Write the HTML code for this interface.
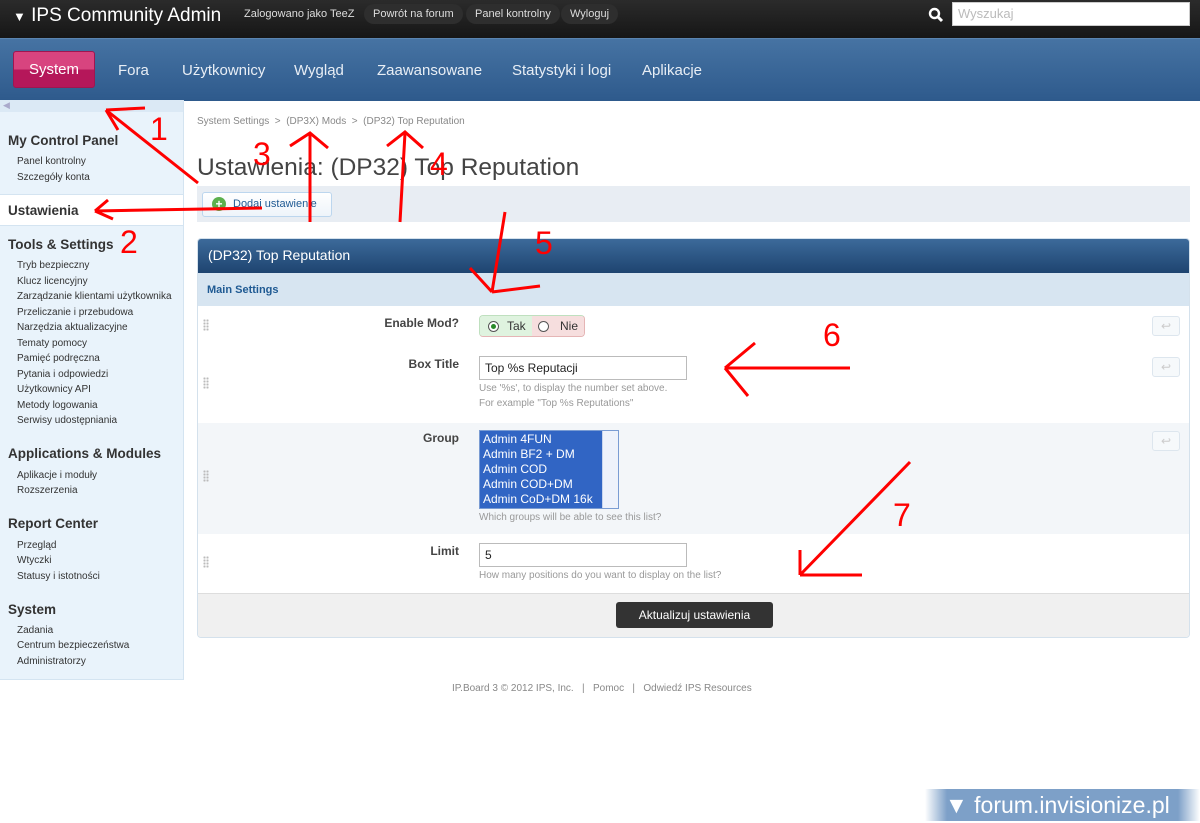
<!DOCTYPE html>
<html><head><meta charset="utf-8"><style>
*{box-sizing:border-box;margin:0;padding:0}
body{width:1200px;height:823px;position:relative;background:#fff;font-family:"Liberation Sans",Arial,sans-serif;overflow:hidden;color:#333}
.a{position:absolute}
#top{left:0;top:0;width:1200px;height:38px;background:linear-gradient(#2b2b2b,#161616)}
.pill{position:absolute;top:4px;height:20px;border-radius:10px;background:#2e2e2e;color:#ddd;font-size:11px;line-height:20px;padding:0 9px}
#nav{left:0;top:38px;width:1200px;height:63px;background:linear-gradient(#4673a3,#2e5a8c);border-top:1px solid #5a84b0}
.ni{position:absolute;top:23px;color:#e8eef5;font-size:15px}
#side{left:0;top:100px;width:184px;height:580px;background:#e9f3fb;border-right:1px solid #d4e4f1;border-bottom:1px solid #d4e4f1}
.sh{position:absolute;left:8px;font-weight:bold;font-size:13.5px;color:#333}
.sl{position:absolute;left:17px;font-size:10px;color:#333}
.lbl{position:absolute;right:741px;font-weight:bold;font-size:12px;color:#444;text-align:right}
.hint{position:absolute;left:479px;font-size:10px;color:#999}
.inp{position:absolute;left:479px;width:208px;height:24px;border:1px solid #bbb;background:#fff;font-size:12px;padding:4px 5px;color:#222}
.rev{position:absolute;left:1152px;width:28px;height:20px;border:1px solid #dde6ee;border-radius:3px;background:#f6f9fb;color:#ccc;font-size:12px;text-align:center;line-height:18px}
.drag{position:absolute;left:203px;width:6px;height:12px;background-image:radial-gradient(#bbb 1px,transparent 1.2px);background-size:3px 3px}
</style></head><body>
<div id="top" class="a">
 <div class="a" style="left:13px;top:5px;color:#fff;font-size:19px;"><span style="font-size:13px">&#9660;</span> IPS Community Admin</div>
 <div class="a" style="left:244px;top:8px;color:#ddd;font-size:11px">Zalogowano jako TeeZ</div>
 <div class="pill" style="left:364px">Powrót na forum</div>
 <div class="pill" style="left:466px">Panel kontrolny</div>
 <div class="pill" style="left:561px">Wyloguj</div>
 <svg class="a" style="left:928px;top:7px" width="16" height="16"><circle cx="6.5" cy="6.5" r="4.5" stroke="#fff" stroke-width="2.4" fill="none"/><line x1="10" y1="10" x2="14" y2="14" stroke="#fff" stroke-width="3"/></svg>
 <div class="a" style="left:952px;top:2px;width:238px;height:24px;background:#fff;border:1px solid #ccc;color:#bbb;font-size:13px;padding:3px 5px">Wyszukaj</div>
</div>
<div id="nav" class="a">
 <div class="a" style="left:13px;top:12px;width:82px;height:37px;border-radius:3px;background:linear-gradient(#d8447f 50%,#b5175a 50%);border:1px solid #a01550;color:#fff;font-size:15px;text-align:center;line-height:35px">System</div>
 <div class="ni" style="left:118px">Fora</div>
 <div class="ni" style="left:182px">Użytkownicy</div>
 <div class="ni" style="left:294px">Wygląd</div>
 <div class="ni" style="left:377px">Zaawansowane</div>
 <div class="ni" style="left:512px">Statystyki i logi</div>
 <div class="ni" style="left:642px">Aplikacje</div>
</div>
<div id="side" class="a">
 <div class="a" style="left:0;top:0;width:183px;height:12px;background:#dbe9f5;color:#aac;font-size:9px;padding-left:3px">&#9664;</div>
 <div class="sh" style="top:33px">My Control Panel</div>
 <div class="sl" style="top:56px">Panel kontrolny</div>
 <div class="sl" style="top:72px">Szczegóły konta</div>
 <div class="a" style="left:0;top:94px;width:183px;height:32px;background:#fff;border-top:1px solid #d4e4f1;border-bottom:1px solid #d4e4f1"></div>
 <div class="sh" style="top:103px">Ustawienia</div>
 <div class="sh" style="top:137px">Tools &amp; Settings</div>
 <div class="sl" style="top:160px">Tryb bezpieczny</div>
 <div class="sl" style="top:176px">Klucz licencyjny</div>
 <div class="sl" style="top:191px">Zarządzanie klientami użytkownika</div>
 <div class="sl" style="top:207px">Przeliczanie i przebudowa</div>
 <div class="sl" style="top:222px">Narzędzia aktualizacyjne</div>
 <div class="sl" style="top:238px">Tematy pomocy</div>
 <div class="sl" style="top:253px">Pamięć podręczna</div>
 <div class="sl" style="top:269px">Pytania i odpowiedzi</div>
 <div class="sl" style="top:284px">Użytkownicy API</div>
 <div class="sl" style="top:300px">Metody logowania</div>
 <div class="sl" style="top:315px">Serwisy udostępniania</div>
 <div class="sh" style="top:346px">Applications &amp; Modules</div>
 <div class="sl" style="top:370px">Aplikacje i moduły</div>
 <div class="sl" style="top:385px">Rozszerzenia</div>
 <div class="sh" style="top:416px">Report Center</div>
 <div class="sl" style="top:440px">Przegląd</div>
 <div class="sl" style="top:455px">Wtyczki</div>
 <div class="sl" style="top:471px">Statusy i istotności</div>
 <div class="sh" style="top:502px">System</div>
 <div class="sl" style="top:525px">Zadania</div>
 <div class="sl" style="top:540px">Centrum bezpieczeństwa</div>
 <div class="sl" style="top:556px">Administratorzy</div>
</div>
<div class="a" style="left:197px;top:116px;font-size:10px;color:#888">System Settings &nbsp;&gt;&nbsp; (DP3X) Mods &nbsp;&gt;&nbsp; (DP32) Top Reputation</div>
<div class="a" style="left:197px;top:154px;font-size:24.5px;color:#444">Ustawienia: (DP32) Top Reputation</div>
<div class="a" style="left:197px;top:186px;width:993px;height:36px;background:#e8edf3"></div>
<div class="a" style="left:202px;top:192px;width:130px;height:25px;border:1px solid #bcd6ee;border-radius:3px;background:linear-gradient(#fff,#eef4fa);font-size:11px;color:#1f5a93;line-height:23px;padding-left:30px">Dodaj ustawienie</div>
<div class="a" style="left:212px;top:197px;width:14px;height:14px;border-radius:7px;background:#5cb04d;color:#fff;font-size:12px;font-weight:bold;text-align:center;line-height:14px">+</div>
<div class="a" style="left:197px;top:238px;width:993px;height:400px;border:1px solid #d4e1ec;border-radius:4px;overflow:hidden;background:#fff">
 <div class="a" style="left:0;top:0;width:993px;height:34px;background:linear-gradient(#3c6a9a,#1e4470);color:#fff;font-size:14px;padding:8px 10px">(DP32) Top Reputation</div>
 <div class="a" style="left:0;top:34px;width:993px;height:33px;background:#d7e5f1;color:#1f5a93;font-size:11px;font-weight:bold;padding:11px 9px">Main Settings</div>
 <div class="a" style="left:0;top:184px;width:993px;height:111px;background:#f3f6f9"></div>
 <div class="a" style="left:0;top:354px;width:993px;height:46px;background:#f0f0f0;border-top:1px solid #ddd"></div>
</div>
<div class="drag" style="top:319px"></div><div class="drag" style="top:377px"></div><div class="drag" style="top:470px"></div><div class="drag" style="top:556px"></div>
<div class="lbl" style="top:316px">Enable Mod?</div>
<div class="a" style="left:479px;top:315px;width:106px;height:22px;border:1px solid #c9c;border-color:#bfe0bf #e5b5b5 #e5b5b5 #bfe0bf;border-radius:4px;overflow:hidden;font-size:12px">
 <div class="a" style="left:0;top:0;width:52px;height:22px;background:#dff3df;padding:3px 0 0 27px;color:#333">Tak</div>
 <div class="a" style="left:8px;top:5px;width:11px;height:11px;border:1px solid #555;border-radius:6px;background:#fff"><div style="width:5px;height:5px;margin:2px;border-radius:3px;background:#2a8a2a"></div></div>
 <div class="a" style="left:52px;top:0;width:54px;height:22px;background:#f6dede;padding:3px 0 0 28px;color:#333">Nie</div>
 <div class="a" style="left:58px;top:5px;width:11px;height:11px;border:1px solid #555;border-radius:6px;background:#fff"></div>
</div>
<div class="lbl" style="top:357px">Box Title</div>
<div class="inp" style="top:356px">Top %s Reputacji</div>
<div class="hint" style="top:383px">Use '%s', to display the number set above.</div>
<div class="hint" style="top:398px">For example "Top %s Reputations"</div>
<div class="lbl" style="top:431px">Group</div>
<div class="a" style="left:479px;top:430px;width:140px;height:79px;border:1px solid #7a9cd3;background:#3165c4;color:#fff;font-size:12px;line-height:15px;padding:1px 3px">Admin 4FUN<br>Admin BF2 + DM<br>Admin COD<br>Admin COD+DM<br>Admin CoD+DM 16k</div>
<div class="a" style="left:602px;top:431px;width:16px;height:77px;background:#eef2fb;border-left:1px solid #c8d4ee"></div>
<div class="hint" style="top:512px">Which groups will be able to see this list?</div>
<div class="lbl" style="top:544px">Limit</div>
<div class="inp" style="top:543px">5</div>
<div class="hint" style="top:570px">How many positions do you want to display on the list?</div>
<div class="rev" style="top:316px">&#8617;</div><div class="rev" style="top:357px">&#8617;</div><div class="rev" style="top:431px">&#8617;</div>
<div class="a" style="left:616px;top:602px;width:157px;height:26px;border-radius:3px;background:#333;color:#fff;font-size:12px;text-align:center;line-height:26px">Aktualizuj ustawienia</div>
<div class="a" style="left:452px;top:683px;font-size:10px;color:#888">IP.Board 3 © 2012 IPS, Inc. &nbsp; | &nbsp; Pomoc &nbsp; | &nbsp; Odwiedź IPS Resources</div>
<div class="a" style="left:925px;top:789px;width:275px;height:32px;background:linear-gradient(90deg,rgba(125,160,200,0),#7da0c8 8%,#7da0c8 92%,rgba(125,160,200,0));color:#fff;font-size:23px;line-height:32px;padding-left:20px">&#9660; forum.invisionize.pl</div>
<svg class="a" style="left:0;top:0" width="1200" height="823" fill="none" stroke="#f00" stroke-width="3">
<path d="M198 183 L106 110 M106 110 L145 108 M106 110 L118 130"/>
<path d="M262 208 L95 211 M95 211 L108 200 M95 211 L113 219"/>
<path d="M310 222 L310 134 M290 146 L310 133 L328 148"/>
<path d="M400 222 L405 133 M387 146 L405 132 L423 148"/>
<path d="M505 212 L492 292 M492 292 L470 268 M492 292 L540 286"/>
<path d="M850 368 L725 368 M725 368 L755 343 M725 368 L748 396"/>
<path d="M910 462 L800 575 M800 575 L800 550 M800 575 L862 575"/>
<g fill="#f00" stroke="none" font-family="Liberation Sans" font-size="32"><text x="150" y="140">1</text><text x="120" y="253">2</text><text x="253" y="165">3</text><text x="430" y="175">4</text><text x="535" y="254">5</text><text x="823" y="346">6</text><text x="893" y="526">7</text></g>
</svg>
</body></html>
